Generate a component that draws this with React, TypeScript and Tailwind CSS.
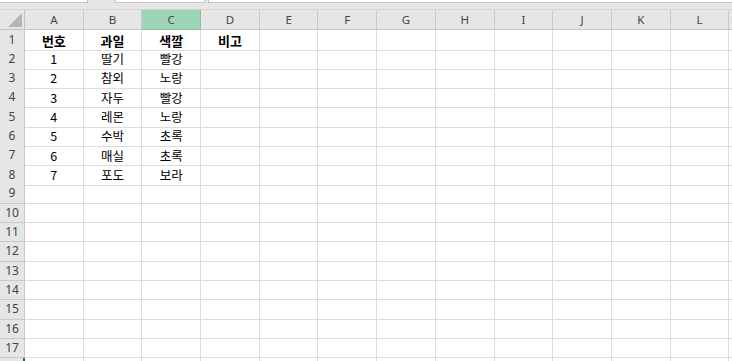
import React from 'react';

const COLS = ['A', 'B', 'C', 'D', 'E', 'F', 'G', 'H', 'I', 'J', 'K', 'L', 'M'];

// sheet contents, row 1 is the bold title row
const DATA: string[][] = [
  ['번호', '과일', '색깔', '비고'],
  ['1', '딸기', '빨강'],
  ['2', '참외', '노랑'],
  ['3', '자두', '빨강'],
  ['4', '레몬', '노랑'],
  ['5', '수박', '초록'],
  ['6', '매실', '초록'],
  ['7', '포도', '보라'],
];

const ROW_COUNT = 18;

const SelectAll: React.FC = () => (
  <div className="h-full bg-[#e6e6e6] border-r border-b border-[#c4c4c4] flex items-end justify-end pr-[2px] pb-[2px]">
    <svg width="14" height="14" viewBox="0 0 14 14">
      <polygon points="14,0 14,14 0,14" fill="#b5b5b5" />
    </svg>
  </div>
);

const App: React.FC = () => {
  return (
    <div className="w-[732px] h-[361px] overflow-hidden bg-white flex flex-col font-['Noto_Sans',sans-serif]">
      {/* what is left of the name box / formula bar */}
      <div className="h-[10px] shrink-0 bg-[#e6e6e6] flex items-start border-b border-[#d6d6d6]">
        <div className="w-[88px] h-[3px] bg-white border-r border-b border-[#c6c6c6]" />
        <div className="ml-[27px] w-[90px] h-[3px] bg-white border-l border-r border-b border-[#c6c6c6]" />
        <div className="ml-[3px] flex-1 h-[3px] bg-white border-l border-b border-[#c6c6c6]" />
      </div>

      {/* column headers */}
      <div className="grid grid-cols-[25px_repeat(13,58.7px)] h-[19.5px] shrink-0">
        <SelectAll />
        {COLS.map((c) => (
          <div
            key={c}
            className={
              c === 'C'
                ? 'h-full bg-[#9fd5b7] border-r border-b border-[#8cc0a3] flex items-center justify-center text-[11.5px] text-[#2f4f3d]'
                : 'h-full bg-[#e6e6e6] border-r border-b border-[#c8c8c8] flex items-center justify-center text-[11.5px] text-[#444]'
            }
          >
            {c === 'M' ? '' : c}
          </div>
        ))}
      </div>

      {/* rows */}
      <div className="flex flex-col">
        {Array.from({ length: ROW_COUNT }, (_, r) => {
          const values = DATA[r] ?? [];
          const bold = r === 0;
          const last = r === ROW_COUNT - 1;
          return (
            <div key={r} className="grid grid-cols-[25px_repeat(13,58.7px)] h-[19.35px] shrink-0">
              <div
                className={
                  last
                    ? 'h-full bg-[#e6e6e6] border-r-2 border-[#217346]'
                    : 'h-full bg-[#e6e6e6] border-r border-b border-[#c8c8c8] text-[12px] text-[#444] flex items-center justify-center'
                }
              >
                {last ? '' : r + 1}
              </div>
              {COLS.map((c, ci) => (
                <div
                  key={c}
                  className={
                    bold
                      ? "h-full border-r border-b border-[#dcdcdc] flex items-center justify-center pt-[1px] text-[13px] font-bold text-black font-['Noto_Sans_CJK_KR',sans-serif]"
                      : "h-full border-r border-b border-[#dcdcdc] flex items-center justify-center pt-[1px] text-[12.5px] text-black font-['Noto_Sans_CJK_KR',sans-serif]"
                  }
                >
                  {values[ci] ?? ''}
                </div>
              ))}
            </div>
          );
        })}
      </div>
    </div>
  );
};

export default App;
